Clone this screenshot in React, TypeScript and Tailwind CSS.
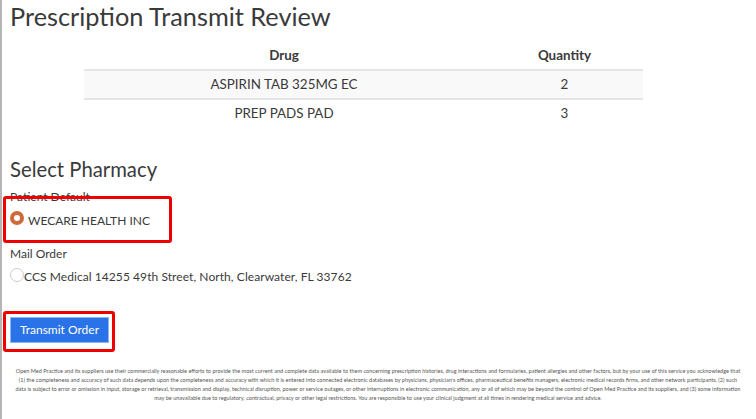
export default function App() {
  const disclaimer = [
    "Open Med Practice and its suppliers use their commercially reasonable efforts to provide the most current and complete data available to them concerning prescription histories, drug interactions and formularies, patient allergies and other factors, but by your use of this service you acknowledge that",
    "(1) the completeness and accuracy of such data depends upon the completeness and accuracy with which it is entered into connected electronic databases by physicians, physician's offices, pharmaceutical benefits managers, electronic medical records firms, and other network participants, (2) such",
    "data is subject to error or omission in input, storage or retrieval, transmission and display, technical disruption, power or service outages, or other interruptions in electronic communication, any or all of which may be beyond the control of Open Med Practice and its suppliers, and (3) some information",
    "may be unavailable due to regulatory, contractual, privacy or other legal restrictions. You are responsible to use your clinical judgment at all times in rendering medical service and advice.",
  ];
  return (
    <div className="relative w-[756px] h-[419px] overflow-hidden bg-white text-[#3a3a3a] font-['Lato','Noto_Sans',sans-serif] border-l-2 border-[#b5b5b5] pl-[8px]">
      <h1 className="text-[25.3px] leading-[30px] pt-[1px] font-normal">Prescription Transmit Review</h1>
      <table className="ml-[74px] mt-[7px] w-[559px] table-fixed border-collapse text-[13.4px] text-center">
        <thead>
          <tr className="h-[32px] border-b-2 border-[#e5e5e5] font-bold">
            <th className="w-[400px] pt-[4px]">Drug</th>
            <th className="pt-[4px] pl-[2px]">Quantity</th>
          </tr>
        </thead>
        <tbody>
          <tr className="h-[29px] bg-[#f9f9f9] border-b-2 border-[#e5e5e5]">
            <td>ASPIRIN TAB 325MG EC</td>
            <td className="pl-[2px]">2</td>
          </tr>
          <tr className="h-[27px]">
            <td>PREP PADS PAD</td>
            <td className="pl-[2px]">3</td>
          </tr>
        </tbody>
      </table>
      <h2 className="text-[20.3px] leading-[24px] mt-[31px] font-normal">Select Pharmacy</h2>
      <div className="text-[12px] leading-[16px] mt-[8px]">Patient Default</div>
      <label className="flex items-center h-[19px] mt-[6px] text-[12px]">
        <span className="flex items-center justify-center w-[14px] h-[14px] rounded-full bg-[#cf6a3c] mb-[5px]">
          <span className="w-[6px] h-[6px] rounded-full bg-white" />
        </span>
        <span className="ml-[4px]">WECARE HEALTH INC</span>
      </label>
      <div className="text-[12px] leading-[16px] mt-[16px]">Mail Order</div>
      <label className="flex items-center h-[19px] mt-[5px] text-[12px]">
        <span className="w-[14px] h-[14px] rounded-full border border-[#ccc] bg-white mb-[3px]" />
        <span className="tracking-[0.07px]">CCS Medical 14255 49th Street, North, Clearwater, FL 33762</span>
      </label>
      <button className="block mt-[31px] w-[99px] h-[26px] ml-0 bg-[#2a72e8] border border-[#8fb5f0] text-white text-[12px]">Transmit Order</button>
      <div className="mt-[24px] pr-[4px] ml-[-6px] text-center text-[5.55px] leading-[9px] text-[#555]">
        {disclaimer.map((l) => (
          <div key={l} className="whitespace-nowrap">{l}</div>
        ))}
      </div>
      <div className="absolute left-[1px] top-[196px] w-[169px] h-[47px] border-[3px] border-[#ee0000] rounded-[3px]" />
      <div className="absolute left-[1px] top-[311px] w-[112px] h-[41px] border-[3px] border-[#ee0000] rounded-[3px]" />
    </div>
  );
}
